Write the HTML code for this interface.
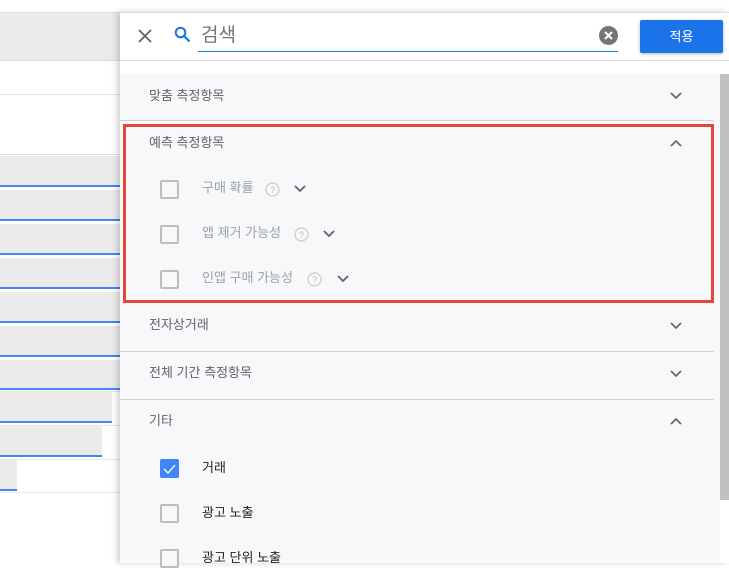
<!DOCTYPE html>
<html><head><meta charset="utf-8"><style>
*{margin:0;padding:0;box-sizing:border-box}
body{width:729px;height:563px;overflow:hidden;background:#fff;position:relative;font-family:"Liberation Sans","Noto Sans CJK KR",sans-serif}
.a{position:absolute}
.t{position:absolute;font-size:13px;color:#5f6368;line-height:16px;white-space:nowrap}
.g{color:#9aa0a6}
.d{color:#202124}
.cb{position:absolute;width:19px;height:19px;border:2px solid #bdbdbd;border-radius:2px;background:#f7f8fa}
</style></head><body>
<!-- left background -->
<div class="a" style="left:0;top:12px;width:120px;height:1px;background:#ddd"></div>
<div class="a" style="left:0;top:13px;width:120px;height:47px;background:#ebebeb"></div>
<div class="a" style="left:0;top:60px;width:120px;height:1px;background:#ddd"></div>
<div class="a" style="left:0;top:94px;width:120px;height:1px;background:#e3e3e3"></div>
<div class="a" style="left:0;top:154px;width:120px;height:1px;background:#e3e3e3"></div>
<div class="a" style="left:0;top:156px;width:120px;height:29px;background:#ebebeb"></div><div class="a" style="left:0;top:185px;width:120px;height:2px;background:#4285f4"></div>
<div class="a" style="left:0;top:190px;width:120px;height:29px;background:#ebebeb"></div><div class="a" style="left:0;top:219px;width:120px;height:2px;background:#4285f4"></div>
<div class="a" style="left:0;top:224px;width:120px;height:29px;background:#ebebeb"></div><div class="a" style="left:0;top:253px;width:120px;height:2px;background:#4285f4"></div>
<div class="a" style="left:0;top:258px;width:120px;height:29px;background:#ebebeb"></div><div class="a" style="left:0;top:287px;width:120px;height:2px;background:#4285f4"></div>
<div class="a" style="left:0;top:292px;width:120px;height:29px;background:#ebebeb"></div><div class="a" style="left:0;top:321px;width:120px;height:2px;background:#4285f4"></div>
<div class="a" style="left:0;top:326px;width:120px;height:29px;background:#ebebeb"></div><div class="a" style="left:0;top:355px;width:120px;height:2px;background:#4285f4"></div>
<div class="a" style="left:0;top:360px;width:120px;height:28px;background:#ebebeb"></div><div class="a" style="left:0;top:388px;width:120px;height:2px;background:#4285f4"></div>
<div class="a" style="left:0;top:391px;width:120px;height:1px;background:#e8e8e8"></div>
<div class="a" style="left:0;top:392px;width:112px;height:29px;background:#ebebeb"></div><div class="a" style="left:0;top:421px;width:112px;height:2px;background:#4285f4"></div>
<div class="a" style="left:0;top:425px;width:120px;height:1px;background:#e8e8e8"></div>
<div class="a" style="left:0;top:426px;width:102px;height:29px;background:#ebebeb"></div><div class="a" style="left:0;top:455px;width:102px;height:2px;background:#4285f4"></div>
<div class="a" style="left:0;top:459px;width:120px;height:1px;background:#e8e8e8"></div>
<div class="a" style="left:0;top:460px;width:17px;height:29px;background:#ebebeb"></div><div class="a" style="left:0;top:489px;width:17px;height:2px;background:#4285f4"></div>
<div class="a" style="left:0;top:492px;width:120px;height:1px;background:#e8e8e8"></div>

<!-- panel -->
<div class="a" style="left:120px;top:12px;width:609px;height:551px;background:#fff;box-shadow:-3px 0 6px rgba(0,0,0,.18)"></div>
<div class="a" style="left:120px;top:12px;width:609px;height:1px;background:#ddd"></div>
<div class="a" style="left:120px;top:60px;width:609px;height:1px;background:#ddd"></div>
<div class="a" style="left:120px;top:73px;width:600px;height:490px;background:#f7f8fa"></div>
<div class="a" style="left:720px;top:74px;width:9px;height:426px;background:#c1c1c1"></div>
<!-- header -->
<svg class="a" style="left:138px;top:29px" width="14" height="14" viewBox="0 0 14 14"><path d="M1 1L13 13M13 1L1 13" stroke="#5f6368" stroke-width="1.8"/></svg>
<svg class="a" style="left:174px;top:26px" width="17" height="17" viewBox="0 0 17 17"><circle cx="6.5" cy="6.5" r="4.8" fill="none" stroke="#1a73e8" stroke-width="2"/><path d="M10 10L15.5 15.5" stroke="#1a73e8" stroke-width="2.2"/></svg>
<div class="t" style="left:201px;top:24px;font-size:19px;line-height:24px;color:#757575">검색</div>
<div class="a" style="left:198px;top:51px;width:420px;height:1px;background:#1a73e8"></div>
<svg class="a" style="left:599px;top:26px" width="19" height="19" viewBox="0 0 19 19"><circle cx="9.5" cy="9.5" r="9.5" fill="#757575"/><path d="M6 6L13 13M13 6L6 13" stroke="#fff" stroke-width="2"/></svg>
<div class="a" style="left:640px;top:20px;width:83px;height:33px;background:#1a73e8;border-radius:2px;box-shadow:0 1px 3px rgba(0,0,0,.3);color:#fff;font-size:13px;text-align:center;line-height:33px">적용</div>

<!-- sections -->
<div class="t" style="left:149px;top:88px">맞춤 측정항목</div>
<svg class="a" style="left:670px;top:92px" width="12" height="8"><path d="M1 1L6 6L11 1" fill="none" stroke="#5f6368" stroke-width="1.6"/></svg>
<div class="a" style="left:120px;top:120px;width:594px;height:1px;background:#d0d0d0"></div>

<div class="a" style="left:123px;top:124px;width:591px;height:179px;border:3px solid #e8453c"></div>
<div class="t" style="left:149px;top:135px">예측 측정항목</div>
<svg class="a" style="left:670px;top:139px" width="12" height="8"><path d="M1 7L6 2L11 7" fill="none" stroke="#5f6368" stroke-width="1.6"/></svg>

<div class="cb" style="left:160px;top:180px"></div>
<div class="t g" style="left:202px;top:180px">구매 확률</div>
<svg class="a" style="left:265px;top:182px" width="15" height="15"><circle cx="7.5" cy="7.5" r="6.5" fill="none" stroke="#ccc" stroke-width="1.2"/><text x="7.5" y="11" font-size="9" text-anchor="middle" fill="#bbb" font-family="Liberation Sans">?</text></svg>
<svg class="a" style="left:294px;top:185px" width="12" height="8"><path d="M1 1L6 6L11 1" fill="none" stroke="#5f6368" stroke-width="1.8"/></svg>

<div class="cb" style="left:160px;top:225px"></div>
<div class="t g" style="left:202px;top:225px">앱 제거 가능성</div>
<svg class="a" style="left:294px;top:227px" width="15" height="15"><circle cx="7.5" cy="7.5" r="6.5" fill="none" stroke="#ccc" stroke-width="1.2"/><text x="7.5" y="11" font-size="9" text-anchor="middle" fill="#bbb" font-family="Liberation Sans">?</text></svg>
<svg class="a" style="left:323px;top:230px" width="12" height="8"><path d="M1 1L6 6L11 1" fill="none" stroke="#5f6368" stroke-width="1.8"/></svg>

<div class="cb" style="left:160px;top:270px"></div>
<div class="t g" style="left:202px;top:270px">인앱 구매 가능성</div>
<svg class="a" style="left:307px;top:272px" width="15" height="15"><circle cx="7.5" cy="7.5" r="6.5" fill="none" stroke="#ccc" stroke-width="1.2"/><text x="7.5" y="11" font-size="9" text-anchor="middle" fill="#bbb" font-family="Liberation Sans">?</text></svg>
<svg class="a" style="left:337px;top:275px" width="12" height="8"><path d="M1 1L6 6L11 1" fill="none" stroke="#5f6368" stroke-width="1.8"/></svg>

<div class="t" style="left:149px;top:317px">전자상거래</div>
<svg class="a" style="left:670px;top:322px" width="12" height="8"><path d="M1 1L6 6L11 1" fill="none" stroke="#5f6368" stroke-width="1.6"/></svg>
<div class="a" style="left:120px;top:351px;width:594px;height:1px;background:#d0d0d0"></div>

<div class="t" style="left:149px;top:365px">전체 기간 측정항목</div>
<svg class="a" style="left:670px;top:370px" width="12" height="8"><path d="M1 1L6 6L11 1" fill="none" stroke="#5f6368" stroke-width="1.6"/></svg>
<div class="a" style="left:120px;top:399px;width:594px;height:1px;background:#d0d0d0"></div>

<div class="t" style="left:149px;top:413px">기타</div>
<svg class="a" style="left:670px;top:417px" width="12" height="8"><path d="M1 7L6 2L11 7" fill="none" stroke="#5f6368" stroke-width="1.6"/></svg>

<div class="a" style="left:160px;top:459px;width:19px;height:19px;background:#4285f4;border-radius:2px"></div>
<svg class="a" style="left:160px;top:459px" width="19" height="19"><path d="M4 10L8 14L15 6" fill="none" stroke="#fff" stroke-width="1.3"/></svg>
<div class="t d" style="left:202px;top:460px">거래</div>
<div class="cb" style="left:160px;top:504px"></div>
<div class="t d" style="left:202px;top:505px">광고 노출</div>
<div class="cb" style="left:160px;top:549px"></div>
<div class="t d" style="left:202px;top:550px">광고 단위 노출</div>
</body></html>
